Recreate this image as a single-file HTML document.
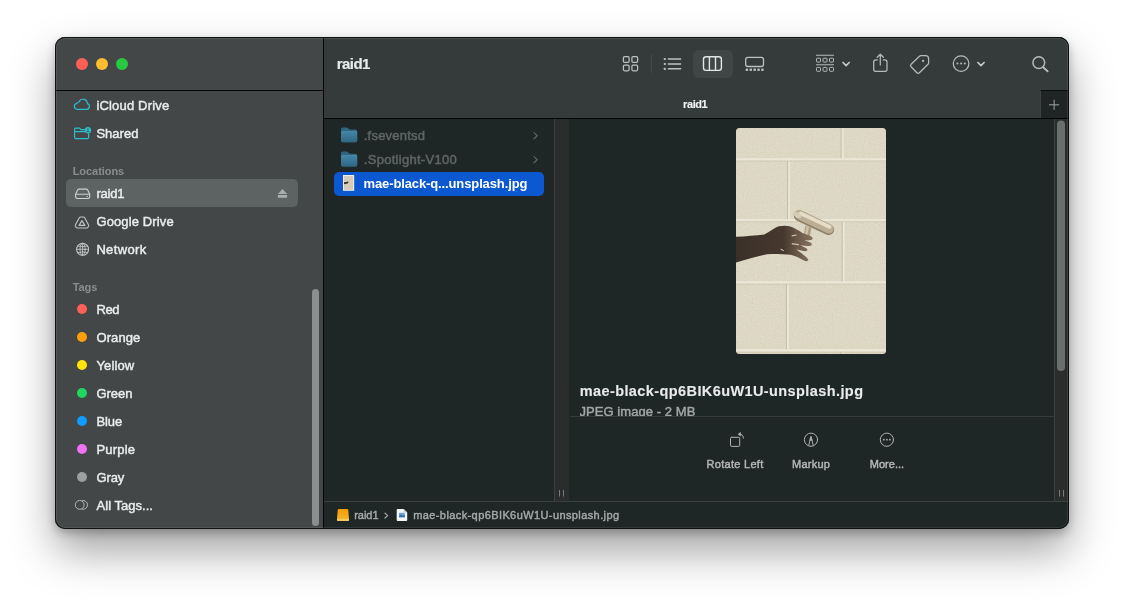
<!DOCTYPE html>
<html lang="en">
<head>
<meta charset="utf-8">
<title>raid1</title>
<style>
html,body{margin:0;padding:0;}
body{width:1124px;height:603px;background:#fff;overflow:hidden;position:relative;
  font-family:"Liberation Sans",sans-serif;-webkit-font-smoothing:antialiased;}
.abs{position:absolute;}
#win{position:absolute;left:55px;top:37px;width:1014px;height:492px;border-radius:10px;
  background:#1f2626;overflow:hidden;
  }
#shadow{position:absolute;left:55px;top:37px;width:1014px;height:492px;border-radius:10px;
  box-shadow:0 22px 44px rgba(0,0,0,.37), 0 4px 10px rgba(0,0,0,.24);}
#ring{position:absolute;left:55px;top:37px;width:1014px;height:492px;border-radius:10px;box-shadow:inset 0 0 0 1px rgba(8,9,9,.88), inset 0 0 0 2px rgba(255,255,255,.09);pointer-events:none;}
#sidebar{position:absolute;left:0;top:0;width:268px;height:492px;background:#434748;}
#sbhead{position:absolute;left:0;top:0;width:268px;height:53px;border-bottom:1px solid #060707;}
#vsep{position:absolute;left:268px;top:0;width:1px;height:492px;background:#040505;}
.tl{position:absolute;top:21px;width:12px;height:12px;border-radius:50%;}
.dot{position:absolute;left:21.8px;width:10.4px;height:10.4px;border-radius:50%;margin-top:-0.2px;}
#toolbar{position:absolute;left:269px;top:0;width:745px;height:53px;background:#353b3b;}
#tabbar{position:absolute;left:269px;top:53px;width:745px;height:28px;background:#353b3b;border-bottom:1px solid #030404;}
#content{position:absolute;left:269px;top:82px;width:745px;height:382px;background:#1f2626;}
#pathbar{position:absolute;left:269px;top:464px;width:745px;height:28px;background:#1f2626;border-top:1px solid #3a4040;box-sizing:border-box;}
svg{position:absolute;overflow:visible;}
.tx{position:absolute;line-height:20px;white-space:nowrap;-webkit-text-stroke:0 currentColor;}
#txt{position:absolute;left:0;top:0;width:1014px;height:492px;will-change:transform;}
</style>
</head>
<body>
<div id="shadow"></div>
<div id="win">
  <!-- SIDEBAR -->
  <div id="sidebar">
    <div id="sbhead"></div>
    <div class="tl" style="left:21px;background:#fe5f57;"></div>
    <div class="tl" style="left:41px;background:#febc2e;"></div>
    <div class="tl" style="left:61px;background:#28c840;"></div>
    <div class="abs" style="left:11px;top:142px;width:232px;height:28px;border-radius:5px;background:#5d6262;"></div>
    <div class="dot" style="top:267px;background:#fe5f57;"></div>
    <div class="dot" style="top:295px;background:#fe9f0a;"></div>
    <div class="dot" style="top:323px;background:#ffe30f;"></div>
    <div class="dot" style="top:351px;background:#20d860;"></div>
    <div class="dot" style="top:379px;background:#0f9cff;"></div>
    <div class="dot" style="top:407px;background:#ee72f4;"></div>
    <div class="dot" style="top:435px;background:#9d9f9f;"></div>
    <div class="abs" style="left:257px;top:252px;width:7px;height:237px;border-radius:4px;background:#8b8e8e;"></div>
  </div>
  <div id="vsep"></div>

  <!-- TOOLBAR -->
  <div id="toolbar">
    <div class="abs" style="left:369px;top:13px;width:40px;height:28px;border-radius:6px;background:#404646;"></div>
    <div class="abs" style="left:327px;top:17px;width:1px;height:19px;background:#434949;"></div>
  </div>
  <div id="tabbar">
    <div class="abs" style="left:716px;top:0;width:29px;height:28px;background:#202424;border-left:1px solid #3c4141;border-top:1px solid #0c0e0e;box-sizing:border-box;"></div>
  </div>

  <!-- CONTENT -->
  <div id="content">
    <div class="abs" style="left:10px;top:53px;width:210px;height:24px;border-radius:5px;background:#0b58d0;"></div>
    <div class="abs" style="left:230px;top:0;width:15px;height:382px;background:#2b2d2d;border-left:1px solid #3b4040;box-sizing:border-box;"></div>
    <div class="abs" style="left:246px;top:297px;width:484px;height:1px;background:#363c3c;"></div>
    <div class="abs" style="left:730px;top:0;width:15px;height:382px;background:#2b2d2d;border-left:1px solid #3b4040;box-sizing:border-box;"></div>
  </div>

  <div id="pathbar">
  </div>

  <!-- TEXT -->
  <div id="txt">
  <div class="tx" style="left:281.7px;top:17px;font-size:15px;font-weight:bold;color:#e9eaea;letter-spacing:-0.532px;-webkit-text-stroke-width:0.15px;">raid1</div>
  <div class="tx" style="left:628.1px;top:57px;font-size:11px;font-weight:bold;color:#f2f3f3;letter-spacing:-0.419px;-webkit-text-stroke-width:0.1px;">raid1</div>
  <div class="tx" style="left:41.4px;top:59px;font-size:13px;font-weight:normal;color:#ebecec;letter-spacing:0.174px;-webkit-text-stroke-width:0.45px;">iCloud Drive</div>
  <div class="tx" style="left:41.4px;top:87px;font-size:13px;font-weight:normal;color:#ebecec;letter-spacing:0.013px;-webkit-text-stroke-width:0.45px;">Shared</div>
  <div class="tx" style="left:17.7px;top:124px;font-size:11px;font-weight:bold;color:#8a8e8e;letter-spacing:-0.050px;-webkit-text-stroke-width:0px;">Locations</div>
  <div class="tx" style="left:41.4px;top:147px;font-size:13px;font-weight:normal;color:#ebecec;letter-spacing:-0.204px;-webkit-text-stroke-width:0.45px;">raid1</div>
  <div class="tx" style="left:41.4px;top:175px;font-size:13px;font-weight:normal;color:#ebecec;letter-spacing:0.127px;-webkit-text-stroke-width:0.45px;">Google Drive</div>
  <div class="tx" style="left:41.4px;top:203px;font-size:13px;font-weight:normal;color:#ebecec;letter-spacing:0.345px;-webkit-text-stroke-width:0.45px;">Network</div>
  <div class="tx" style="left:17.7px;top:240px;font-size:11px;font-weight:bold;color:#8a8e8e;letter-spacing:-0.090px;-webkit-text-stroke-width:0px;">Tags</div>
  <div class="tx" style="left:41.6px;top:263px;font-size:13px;font-weight:normal;color:#ebecec;letter-spacing:-0.486px;-webkit-text-stroke-width:0.45px;">Red</div>
  <div class="tx" style="left:41.5px;top:291px;font-size:13px;font-weight:normal;color:#ebecec;letter-spacing:0.071px;-webkit-text-stroke-width:0.45px;">Orange</div>
  <div class="tx" style="left:41.5px;top:319px;font-size:13px;font-weight:normal;color:#ebecec;letter-spacing:0.115px;-webkit-text-stroke-width:0.45px;">Yellow</div>
  <div class="tx" style="left:41.5px;top:347px;font-size:13px;font-weight:normal;color:#ebecec;letter-spacing:-0.048px;-webkit-text-stroke-width:0.45px;">Green</div>
  <div class="tx" style="left:41.5px;top:375px;font-size:13px;font-weight:normal;color:#ebecec;letter-spacing:-0.108px;-webkit-text-stroke-width:0.45px;">Blue</div>
  <div class="tx" style="left:41.5px;top:403px;font-size:13px;font-weight:normal;color:#ebecec;letter-spacing:0.170px;-webkit-text-stroke-width:0.45px;">Purple</div>
  <div class="tx" style="left:41.5px;top:431px;font-size:13px;font-weight:normal;color:#ebecec;letter-spacing:-0.143px;-webkit-text-stroke-width:0.45px;">Gray</div>
  <div class="tx" style="left:41.5px;top:459px;font-size:13px;font-weight:normal;color:#ebecec;letter-spacing:0.034px;-webkit-text-stroke-width:0.45px;">All Tags...</div>
  <div class="tx" style="left:308.8px;top:89px;font-size:13px;font-weight:normal;color:#5e6565;letter-spacing:0.213px;-webkit-text-stroke-width:0.5px;">.fseventsd</div>
  <div class="tx" style="left:308.8px;top:113px;font-size:13px;font-weight:normal;color:#5e6565;letter-spacing:0.286px;-webkit-text-stroke-width:0.5px;">.Spotlight-V100</div>
  <div class="tx" style="left:308.5px;top:137px;font-size:13px;font-weight:bold;color:#ffffff;letter-spacing:-0.118px;-webkit-text-stroke-width:0px;">mae-black-q...unsplash.jpg</div>
  <div class="tx" style="left:524.7px;top:344px;font-size:14.5px;font-weight:bold;color:#e9eaea;letter-spacing:0.406px;-webkit-text-stroke-width:0.1px;">mae-black-qp6BIK6uW1U-unsplash.jpg</div>
  <div class="tx" style="left:524.5px;top:365px;font-size:13px;font-weight:normal;color:#a3a6a6;letter-spacing:0.060px;-webkit-text-stroke-width:0.45px;height:14px;overflow:hidden;">JPEG image - 2 MB</div>
  <div class="tx" style="left:651.5px;top:417px;font-size:11px;font-weight:normal;color:#b3b6b6;letter-spacing:0.297px;-webkit-text-stroke-width:0.45px;">Rotate Left</div>
  <div class="tx" style="left:737.0px;top:417px;font-size:11px;font-weight:normal;color:#b3b6b6;letter-spacing:0.252px;-webkit-text-stroke-width:0.45px;">Markup</div>
  <div class="tx" style="left:814.7px;top:417px;font-size:11px;font-weight:normal;color:#b3b6b6;letter-spacing:0.038px;-webkit-text-stroke-width:0.45px;">More...</div>
  <div class="tx" style="left:299.2px;top:468px;font-size:11px;font-weight:normal;color:#a6aaaa;letter-spacing:-0.034px;-webkit-text-stroke-width:0.4px;">raid1</div>
  <div class="tx" style="left:358.2px;top:468px;font-size:11px;font-weight:normal;color:#a6aaaa;letter-spacing:0.403px;-webkit-text-stroke-width:0.4px;">mae-black-qp6BIK6uW1U-unsplash.jpg</div>
  </div>

  <!-- ICON OVERLAY (page coordinates) -->
  <svg id="ov" style="left:-55px;top:-37px;" width="1124" height="603" viewBox="0 0 1124 603" fill="none">
    <!--SB-ICONS-->
    <g stroke="#2fbccb" stroke-width="1.2" stroke-linejoin="round" stroke-linecap="round">
      <!-- cloud -->
      <path d="M77.4 109.35 A3.05 3.05 0 0 1 76.9 103.3 A2.2 2.2 0 0 1 79 102 A4.3 4.3 0 0 1 87.3 103.6 A2.95 2.95 0 0 1 86.9 109.35 Z"/>
      <!-- shared folder -->
      <path d="M84.6 129.6 H81 L79.6 128.2 H75.6 A1 1 0 0 0 74.6 129.2 V137.6 A1 1 0 0 0 75.6 138.6 H87.6 A1 1 0 0 0 88.6 137.6 V133.6"/>
      <path d="M74.6 131.6 H84.8"/>
    </g>
    <circle cx="87.9" cy="130.2" r="3.2" fill="#2fbccb"/>
    <circle cx="87.9" cy="129.2" r="0.9" fill="#3d6f76"/>
    <path d="M86.1 132.2 A1.8 1.6 0 0 1 89.7 132.2 Z" fill="#3d6f76"/>
    <g stroke="#cfd1d1" stroke-width="1.1" stroke-linejoin="round" stroke-linecap="round">
      <!-- drive -->
      <path d="M75.6 194.2 L77.6 189.9 A1.6 1.6 0 0 1 79 189.1 H86.3 A1.6 1.6 0 0 1 87.7 189.9 L89.7 194.2 V196.8 A1.7 1.7 0 0 1 88 198.5 H77.3 A1.7 1.7 0 0 1 75.6 196.8 Z"/>
      <path d="M75.8 194.2 H89.5"/>
    </g>
    <circle cx="87.2" cy="196.4" r="0.7" fill="#cfd1d1"/>
    <!-- eject -->
    <path d="M282.5 188.9 L287.1 194 H277.9 Z M277.9 195.1 H287.1 V197.8 H277.9 Z" fill="#aaaeae"/>
    <g stroke="#c2c5c5" stroke-width="1.1" stroke-linejoin="round" stroke-linecap="round">
      <!-- google drive -->
      <path d="M80.6 217 H83.4 A1.5 1.5 0 0 1 84.7 217.8 L88.6 224.9 A1.5 1.5 0 0 1 88.6 226.3 L88 227.3 A1.5 1.5 0 0 1 86.7 228 H77.3 A1.5 1.5 0 0 1 76 227.3 L75.4 226.3 A1.5 1.5 0 0 1 75.4 224.9 L79.3 217.8 A1.5 1.5 0 0 1 80.6 217 Z"/>
      <path d="M82 220.6 L84.9 225.4 H79.1 Z"/>
      <!-- network globe -->
      <circle cx="82.6" cy="249.3" r="6"/>
      <ellipse cx="82.6" cy="249.3" rx="2.6" ry="6" stroke-width="0.9"/>
      <path d="M76.6 249.3 H88.6 M82.6 243.3 V255.3 M77.7 246 Q82.6 247.6 87.5 246 M77.7 252.6 Q82.6 251 87.5 252.6" stroke-width="0.9"/>
    </g>
    <!-- all tags -->
    <g stroke="#b4b7b7" stroke-width="1" >
      <circle cx="79.7" cy="504.9" r="4.4"/>
      <path d="M81.8 500.7 A4.4 4.4 0 1 1 81.8 509.1"/>
    </g>
    <!--TB-ICONS-->
    <g stroke="#bcc0c0" stroke-width="1.25" stroke-linejoin="round" stroke-linecap="round">
      <!-- grid -->
      <rect x="623.4" y="56.7" width="5.7" height="5.7" rx="1.2"/>
      <rect x="631.9" y="56.7" width="5.7" height="5.7" rx="1.2"/>
      <rect x="623.4" y="65.1" width="5.7" height="5.7" rx="1.2"/>
      <rect x="631.9" y="65.1" width="5.7" height="5.7" rx="1.2"/>
      <!-- list -->
      <path d="M668.4 59 H680.6 M668.4 63.9 H680.6 M668.4 68.8 H680.6" stroke-width="1.5"/>
      <!-- gallery -->
      <rect x="745.7" y="57.3" width="17.8" height="9.2" rx="2.2" stroke-width="1.3"/>
    </g>
    <g fill="#b6baba">
      <rect x="663.8" y="58" width="2.1" height="2.1" rx="0.4"/>
      <rect x="663.8" y="62.9" width="2.1" height="2.1" rx="0.4"/>
      <rect x="663.8" y="67.8" width="2.1" height="2.1" rx="0.4"/>
      <rect x="745.6" y="68.6" width="2.5" height="2.4" rx="0.4"/>
      <rect x="749.5" y="68.6" width="2.5" height="2.4" rx="0.4"/>
      <rect x="753.4" y="68.6" width="2.5" height="2.4" rx="0.4"/>
      <rect x="757.3" y="68.6" width="2.5" height="2.4" rx="0.4"/>
      <rect x="761.2" y="68.6" width="2.5" height="2.4" rx="0.4"/>
    </g>
    <!-- columns (selected) -->
    <g stroke="#e3e5e5" stroke-width="1.4" stroke-linejoin="round">
      <rect x="703.5" y="56.8" width="17.9" height="13.6" rx="2.6"/>
      <path d="M709.4 56.8 V70.4 M715.5 56.8 V70.4"/>
    </g>
    <!-- group -->
    <g stroke="#b6baba" stroke-width="1" stroke-linejoin="round">
      <path d="M816 55.3 H834 M816 64.7 H834" stroke-width="1.1"/>
      <rect x="816.5" y="58.2" width="4" height="3.9" rx="0.8"/>
      <rect x="823" y="58.2" width="4" height="3.9" rx="0.8"/>
      <rect x="829.5" y="58.2" width="4" height="3.9" rx="0.8"/>
      <rect x="816.5" y="67.4" width="4" height="3.9" rx="0.8"/>
      <rect x="823" y="67.4" width="4" height="3.9" rx="0.8"/>
      <rect x="829.5" y="67.4" width="4" height="3.9" rx="0.8"/>
    </g>
    <g stroke="#c3c6c6" stroke-width="1.7" stroke-linejoin="round" stroke-linecap="round">
      <path d="M843 62.5 L846.1 65.7 L849.2 62.5"/>
      <path d="M977.9 62.5 L981 65.7 L984.1 62.5"/>
    </g>
    <g stroke="#b6baba" stroke-width="1.25" stroke-linejoin="round" stroke-linecap="round">
      <!-- share -->
      <path d="M877.3 59.9 H875.9 A2.2 2.2 0 0 0 873.7 62.1 V69.2 A2.2 2.2 0 0 0 875.9 71.4 H884.8 A2.2 2.2 0 0 0 887 69.2 V62.1 A2.2 2.2 0 0 0 884.8 59.9 H883.4"/>
      <path d="M880.3 65 V54.4 M877.2 57.3 L880.3 54.2 L883.4 57.3"/>
      <!-- tag -->
      <path d="M920.9 55.7 H925.6 A3 3 0 0 1 928.6 58.7 V62.9 A2 2 0 0 1 928 64.3 L919.4 72.7 A1.8 1.8 0 0 1 916.9 72.7 L911.1 66.8 A1.8 1.8 0 0 1 911.1 64.3 L919.5 56.3 A2 2 0 0 1 920.9 55.7 Z"/>
      <!-- more -->
      <circle cx="961.1" cy="63.6" r="7.8"/>
      <!-- search -->
      <circle cx="1038.8" cy="62.6" r="5.9" stroke-width="1.5"/>
      <path d="M1043.2 67.2 L1047.6 71.3" stroke-width="1.9"/>
    </g>
    <g fill="#b6baba">
      <circle cx="923.1" cy="60.9" r="1.1"/>
      <circle cx="957.4" cy="63.6" r="1"/>
      <circle cx="961.1" cy="63.6" r="1"/>
      <circle cx="964.8" cy="63.6" r="1"/>
    </g>
    <!-- plus -->
    <path d="M1049 104.8 H1059.2 M1054.1 99.7 V109.9" stroke="#9fa3a3" stroke-width="1"/>
    <!--FILE-ICONS-->
    <g>
      <path d="M341 129.3 A1.9 1.9 0 0 1 342.9 127.4 H346.6 A1.6 1.6 0 0 1 347.7 127.9 L348.9 129.1 A1.6 1.6 0 0 0 350 129.6 H355.4 A1.8 1.8 0 0 1 357.2 131.4 V140.5 A1.8 1.8 0 0 1 355.4 142.3 H342.8 A1.8 1.8 0 0 1 341 140.5 Z" fill="#2f6584"/>
      <path d="M341 131.9 A1 1 0 0 1 342 130.9 H356.2 A1 1 0 0 1 357.2 131.9 V140.5 A1.8 1.8 0 0 1 355.4 142.3 H342.8 A1.8 1.8 0 0 1 341 140.5 Z" fill="url(#fold)"/>
    </g>
    <g transform="translate(0 24.2)">
      <path d="M341 129.3 A1.9 1.9 0 0 1 342.9 127.4 H346.6 A1.6 1.6 0 0 1 347.7 127.9 L348.9 129.1 A1.6 1.6 0 0 0 350 129.6 H355.4 A1.8 1.8 0 0 1 357.2 131.4 V140.5 A1.8 1.8 0 0 1 355.4 142.3 H342.8 A1.8 1.8 0 0 1 341 140.5 Z" fill="#2f6584"/>
      <path d="M341 131.9 A1 1 0 0 1 342 130.9 H356.2 A1 1 0 0 1 357.2 131.9 V140.5 A1.8 1.8 0 0 1 355.4 142.3 H342.8 A1.8 1.8 0 0 1 341 140.5 Z" fill="url(#fold)"/>
    </g>
    <!-- thumbnail -->
    <rect x="343" y="175" width="11.2" height="15.8" fill="#f1efe9"/>
    <rect x="344" y="176" width="9.2" height="13.8" fill="#d6cbb6"/>
    <path d="M344 182.3 L346.4 182 L347.8 181.6 L348.6 182.4 L347.6 183.6 L344 184.2 Z" fill="#3b3029"/>
    <!-- chevrons -->
    <path d="M534 132.6 L537.2 135.7 L534 138.8 M534 156.6 L537.2 159.7 L534 162.8" stroke="#5e6464" stroke-width="1.2" stroke-linecap="round" stroke-linejoin="round"/>
    <!-- resize handles -->
    <path d="M559.5 490 V496.6 M563.5 490 V496.6 M1059.5 490 V496.6 M1063.5 490 V496.6" stroke="#777b7b" stroke-width="1"/>
    <!-- right scroll thumb -->
    <rect x="1057" y="120.5" width="8" height="250.5" rx="4" fill="#6b6e6e"/>
    <!--PREVIEW-->
    <defs>
      <clipPath id="pclip"><rect x="736" y="128" width="150" height="226" rx="3.5"/></clipPath>
      <filter id="grain" x="0" y="0" width="100%" height="100%">
        <feTurbulence type="fractalNoise" baseFrequency="0.9" numOctaves="2" seed="7" result="n"/>
        <feColorMatrix in="n" type="matrix" values="0 0 0 0 0.35  0 0 0 0 0.31  0 0 0 0 0.24  0.55 0.55 0 0 -0.42"/>
      </filter>
      <linearGradient id="dry" x1="0" y1="0" x2="0" y2="1">
        <stop offset="0" stop-color="#c9bda6"/><stop offset="0.35" stop-color="#e9e1cf"/><stop offset="1" stop-color="#a89a82"/>
      </linearGradient>
      <linearGradient id="armg" x1="0" y1="0" x2="1" y2="0">
        <stop offset="0" stop-color="#3b3029"/><stop offset="0.62" stop-color="#46382f"/><stop offset="0.8" stop-color="#6a5848"/><stop offset="1" stop-color="#85725f"/>
      </linearGradient>
    </defs>
    <g clip-path="url(#pclip)">
      <rect x="736" y="128" width="150" height="226" fill="#e1dbc8"/>
      <rect x="736" y="128" width="150" height="226" filter="url(#grain)" opacity="0.42"/>
      <!-- mortar -->
      <g fill="#ebe6d6">
        <rect x="736" y="158.2" width="150" height="2.6"/>
        <rect x="736" y="219" width="150" height="2.6"/>
        <rect x="736" y="281.2" width="150" height="2.8"/>
        <rect x="736" y="349.2" width="150" height="2.8"/>
        <rect x="841" y="128" width="2.6" height="31"/>
        <rect x="787.4" y="160" width="2.6" height="60"/>
        <rect x="842" y="221" width="2.6" height="61"/>
        <rect x="786.2" y="283" width="2.6" height="67"/>
        <rect x="841" y="351" width="2.6" height="4"/>
      </g>
      <g stroke="#a9a18d" stroke-width="0.7" opacity="0.85">
        <path d="M841.2 128 V158.4 M787.6 161 V219.2 M842.2 221.6 V281.4 M786.4 284 V349.4 M841.2 352 V354"/>
        <path d="M736 160.9 H886 M736 221.7 H886 M736 284 H886 M736 352 H886" opacity="0.55"/>
      </g>
      <!-- dryer handle -->
      <path d="M805.4 225.5 L811.6 227.8 L808.6 241 L803 239.6 Z" fill="#ad9d83"/>
      <path d="M806.6 226 L809 226.9 L806 240.3 L804 239.8 Z" fill="#cfc3ab"/>
      <!-- dryer head -->
      <path d="M799.4 215.8 L828.6 229.6" stroke="#8f806a" stroke-width="11" stroke-linecap="round"/>
      <path d="M799.7 215 L828.9 228.8" stroke="#bcae95" stroke-width="9.4" stroke-linecap="round"/>
      <path d="M800.6 213.4 L829.6 227" stroke="#e6ddc9" stroke-width="3.6" stroke-linecap="round"/>
      <ellipse cx="797.2" cy="214.8" rx="2.6" ry="4.6" transform="rotate(-64 797.2 214.8)" fill="#d9cfba" opacity="0.9"/>
      <!-- arm + hand -->
      <path d="M736 236.8 C746 236.2 756 235.4 764.4 234.4 C770 232 774 227.6 779.2 226.3 C785 225 790 226 794 228 C797.6 229.8 801 231.8 803.4 233.6 C806.6 234.8 810.4 235.8 812.2 237.2 C813.2 238.6 812.4 239.8 810.6 240 C808.4 240.2 806 240 804.4 240.4 C807 241 810.2 242 811.6 243.2 C812.4 244.8 811.2 246 809.4 246 C806.4 246 802.8 245.4 800.2 245.4 C802.8 246.4 806 247.6 807.2 249 C807.8 250.6 806.4 251.4 804.6 251.2 C801.8 250.8 798.8 249.8 796.6 249.6 C800.6 252.6 806.6 257 808.4 259.8 C808 261.6 806 261.4 804 260.4 C799.6 258.2 795 255.8 790.6 254.8 C787.6 254.8 785 254.4 782 254.2 C776.4 254 771.6 253.9 767 254.3 C757 256.2 746 259.6 736 262.4 Z" fill="url(#armg)"/>
      <path d="M791.4 235.3 L796.2 234.5 L796.8 235.5 L792 236.5 Z M791.6 242.9 L799 244.1 L799 245.3 L792 244.4 Z M780.8 248.4 L784.2 250.5 L783.4 251.3 L780.4 249.4 Z" fill="#d9d1bc" opacity="0.85"/>
    </g>
    <!--ACTIONS-->
    <g stroke="#b0b4b4" stroke-width="1" stroke-linejoin="round" stroke-linecap="round">
      <rect x="730.5" y="437.3" width="9.2" height="9.1" rx="1.1"/>
      <path d="M739.6 434.1 C742 434.2 743.4 435.8 743.4 438.2"/>
      <path d="M738.3 434.1 L740.5 432.4 V435.8 Z" fill="#b0b4b4" stroke-width="0.6"/>
      <circle cx="811" cy="439.7" r="6.6"/>
      <path d="M808.8 445.3 L809.9 440.4 L811 436.6 L812.1 440.4 L813.2 445.3" stroke-width="0.95"/>
      <path d="M811 436.4 L812.2 440.6 H809.8 Z" fill="#b0b4b4" stroke-width="0.4"/>
      <circle cx="886.9" cy="439.7" r="6.6"/>
    </g>
    <g fill="#b0b4b4">
      <circle cx="883.9" cy="439.7" r="0.85"/><circle cx="886.9" cy="439.7" r="0.85"/><circle cx="889.9" cy="439.7" r="0.85"/>
    </g>
    <!--PATH-ICONS-->
    <defs>
      <linearGradient id="org" x1="0" y1="0" x2="0" y2="1">
        <stop offset="0" stop-color="#f39a08"/><stop offset="0.8" stop-color="#f3b423"/><stop offset="0.82" stop-color="#f7cf6a"/><stop offset="1" stop-color="#f5c65a"/>
      </linearGradient>
      <linearGradient id="fold" x1="0" y1="0" x2="0" y2="1">
        <stop offset="0" stop-color="#4686a6"/><stop offset="1" stop-color="#2f6685"/>
      </linearGradient>
    </defs>
    <path d="M338.6 508.9 H347.4 A0.8 0.8 0 0 1 348.2 509.6 L349.1 519.9 A0.9 0.9 0 0 1 348.2 520.9 H337.8 A0.9 0.9 0 0 1 336.9 519.9 L337.8 509.6 A0.8 0.8 0 0 1 338.6 508.9 Z" fill="url(#org)"/>
    <path d="M385 513.2 L387.7 515.6 L385 518" stroke="#a5a9a9" stroke-width="1.2" stroke-linecap="round" stroke-linejoin="round"/>
    <path d="M397.6 508.9 H403.6 L407.2 512.5 V520 A0.9 0.9 0 0 1 406.3 520.9 H397.6 A0.9 0.9 0 0 1 396.7 520 V509.8 A0.9 0.9 0 0 1 397.6 508.9 Z" fill="#f4f5f6"/>
    <path d="M403.6 508.9 L407.2 512.5 H404.4 A0.8 0.8 0 0 1 403.6 511.7 Z" fill="#c9ced2"/>
    <rect x="399" y="512.8" width="5.8" height="4.4" fill="#6aa4d6"/>
    <path d="M399 516 L401 514.6 L402.6 515.8 L404.8 514.8 V517.2 H399 Z" fill="#3b6ea0"/>
  </svg>
</div>
<div id="ring"></div>
</body>
</html>
